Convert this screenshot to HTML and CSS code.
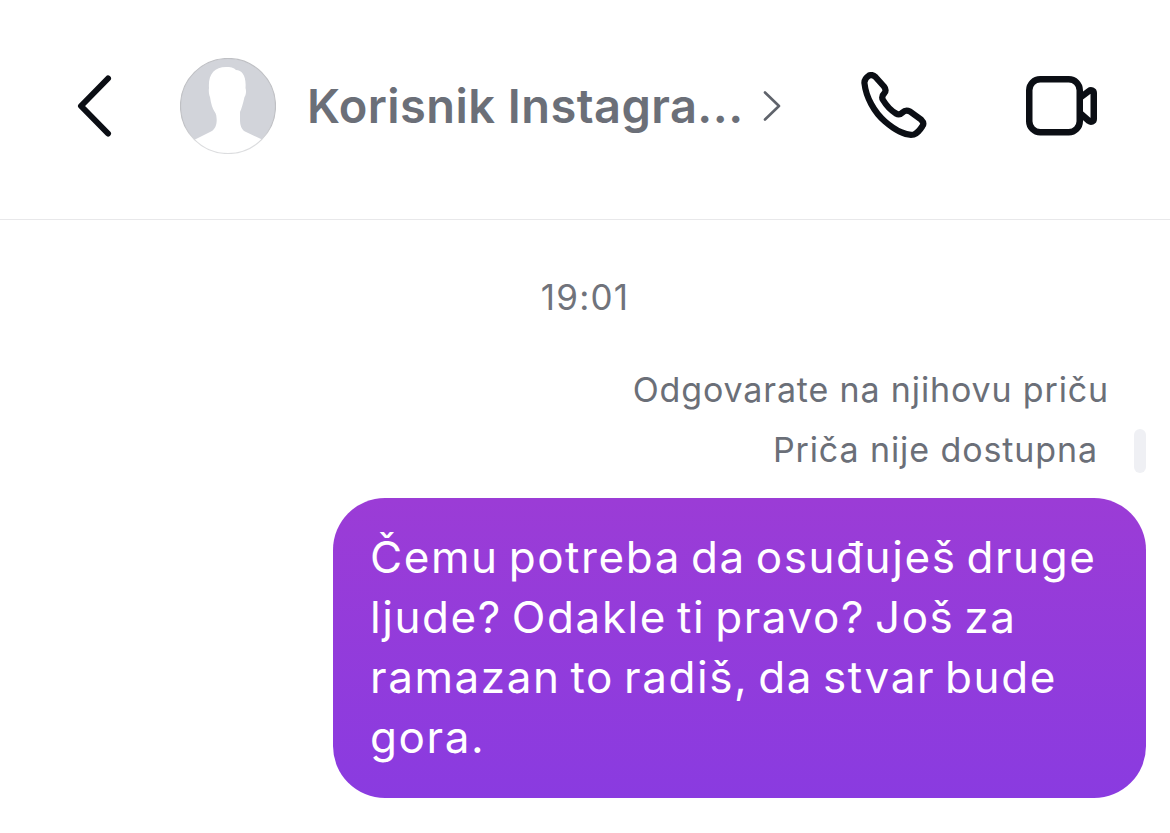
FILE: index.html
```html
<!DOCTYPE html>
<html lang="bs">
<head>
<meta charset="utf-8">
<title>Korisnik Instagrama</title>
<link rel="stylesheet" href="styles.css">
</head>
<body>
<div class="screen">
  <header class="header">
    <svg class="icon-back" viewBox="0 0 36 62" width="36" height="62" fill="none"><path d="M31 3.500 4 31l27 27.500" stroke="#0b0e14" stroke-width="6" stroke-linecap="round" stroke-linejoin="round"/></svg>
    <svg class="avatar" viewBox="0 0 96 96" width="96" height="96">
      <defs>
        <clipPath id="av"><circle cx="48" cy="48" r="47.500"/></clipPath>
        <linearGradient id="ring" x1="0" y1="0" x2="0" y2="1"><stop offset="0.7" stop-color="#bfc0c4"/><stop offset="0.9" stop-color="#dcdddf"/></linearGradient>
      </defs>
      <circle cx="48" cy="48" r="48" fill="#fff"/>
      <path clip-path="url(#av)" d="M0 0H96V88L81 81 65 73.500C61.500 71.500 60 67 60 62V54C61.500 50.500 63 46 64.500 39 66 37 66.500 33 65.500 30 66.500 18 62 12 56 12 54 9.500 50 9 46 9 34 9 28 17 29 30 28.500 33 29 37 30 39 31 46 32.500 50.500 34.500 53.500 36.500 56 36.500 59 36.700 62 36.700 67 35 71.500 31 73.500L16 81 0 88Z" fill="#d2d4da"/>
      <circle cx="48" cy="48" r="47.500" fill="none" stroke="url(#ring)" stroke-width="1.200"/>
    </svg>
    <span class="name">Korisnik Instagra...</span>
    <svg class="icon-chevron" viewBox="0 0 18 30" width="18" height="30" fill="none"><path d="M2 1.500 16 15 2 28.500" stroke="#5f636b" stroke-width="2.600" stroke-linecap="round" stroke-linejoin="round"/></svg>
    <svg class="icon-phone" viewBox="0 0 68 68" width="68" height="68" fill="none"><path d="M3.500 11.500C3 8 5 5.500 8 3.500 10.500 2.500 12.500 3 14.500 5L23 14.500C25 17 25 19 23.500 21 21 23.500 20.500 25.500 22 28 25 33 30 38.500 35 41.500 37.500 43 39.500 42.500 41.500 40.500 44 38 46 38 49 39.500L60 47.500C62.500 50 63 52 61.500 54 59 58 56.500 61 53 62.500 46 64 35 59 24 49.500 13 40 5 25 3.500 11.500Z" stroke="#0b0e14" stroke-width="6.200" stroke-linejoin="round"/></svg>
    <svg class="icon-video" viewBox="0 0 72 60" width="72" height="60" fill="none"><rect x="3.250" y="3.250" width="50.500" height="53" rx="11" stroke="#0b0e14" stroke-width="6.500"/><path d="M55 21 63 15C65 13.500 67.750 14.500 67.750 17V43C67.750 45.500 65 46.500 63 45L55 38" stroke="#0b0e14" stroke-width="6.500" stroke-linejoin="round"/></svg>
  </header>
  <main class="thread">
    <div class="time">19:01</div>
    <div class="reply-note">Odgovarate na njihovu priču</div>
    <div class="story-row">
      <span class="story-text">Priča nije dostupna</span>
      <span class="story-bar"></span>
    </div>
    <div class="bubble">Čemu potreba da osuđuješ druge ljude? Odakle ti pravo? Još za ramazan to radiš, da stvar bude gora.</div>
  </main>
</div>
</body>
</html>
```
FILE: styles.css
```css
* { box-sizing: border-box; }
html, body { margin: 0; padding: 0; background: #fff; }
body { font-family: Inter, "Liberation Sans", sans-serif; }
.screen { width: 1170px; height: 833px; overflow: hidden; }
.header {
  height: 220px;
  border-bottom: 1px solid #e8e8ea;
  display: flex;
  align-items: center;
  padding: 0 71px 8px 77px;
}
.icon-back { flex: none; }
.avatar { flex: none; margin-left: 67px; }
.name {
  margin-left: 31px;
  font-size: 47px;
  font-weight: 600;
  letter-spacing: 0.45px;
  color: #6b6f78;
  white-space: nowrap;
  line-height: 48px;
}
.icon-chevron { flex: none; margin-left: 19px; }
.icon-phone { flex: none; margin-left: 80px; }
.icon-video { flex: none; margin-left: 97px; }
.thread { padding: 0 24px; display: flex; flex-direction: column; }
.time {
  margin-top: 56px;
  text-align: center;
  font-size: 35px;
  letter-spacing: 1.2px;
  line-height: 42px;
  color: #70737b;
}
.reply-note {
  margin-top: 51px;
  align-self: flex-end;
  margin-right: 37px;
  font-size: 34px;
  letter-spacing: 0.85px;
  line-height: 42px;
  color: #6b6f78;
}
.story-row {
  margin-top: 18px;
  display: flex;
  justify-content: flex-end;
  align-items: flex-start;
  gap: 36px;
}
.story-text { font-size: 34px; letter-spacing: 0.9px; line-height: 42px; color: #6b6f78; }
.story-bar { width: 12px; height: 44px; border-radius: 6px; background: #eff0f4; }
.bubble {
  margin-top: 25px;
  align-self: flex-end;
  width: 813px;
  height: 300px;
  padding: 29px 37px;
  border-radius: 52px;
  background: linear-gradient(180deg, #9b3cd6 0%, #8a3be0 100%);
  color: #fff;
  font-size: 44px;
  letter-spacing: 1.58px;
  word-spacing: -4px;
  line-height: 60px;
}
```
